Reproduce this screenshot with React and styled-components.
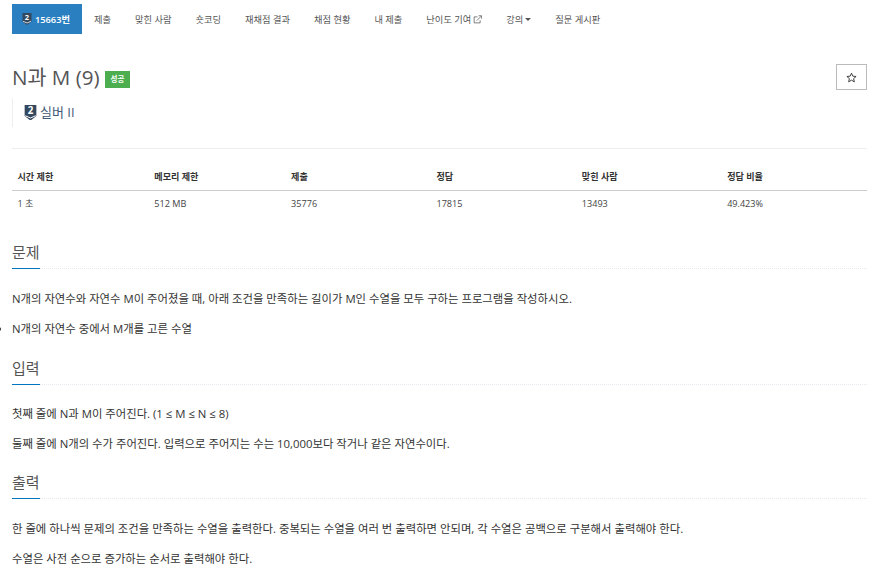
import React from 'react';
import styled, { createGlobalStyle } from 'styled-components';

const GlobalStyle = createGlobalStyle`
    html, body {
        margin: 0;
        background: #fff;
        color: #333;
        font-family: "Open Sans", "Noto Sans CJK KR", sans-serif;
        overflow: hidden;
    }
`;

const Page = styled.div`
    width: 891px;
    height: 585px;
    box-sizing: border-box;
    padding: 4px 24px 0 12px;
    overflow: hidden;
`;

const Nav = styled.ul`
    display: flex;
    list-style: none;
    margin: 0;
    padding: 0;
`;

const NavItem = styled.li`
    display: flex;
    align-items: center;
    gap: 2px;
    height: 30px;
    padding: 0 12px;
    font-size: 9.25px;
    color: #555;
    background: ${p => (p.$active ? '#2a7fc1' : 'transparent')};
    ${p => p.$active && 'color: #fff; font-weight: 600; padding: 0 10px; width: 70px; box-sizing: border-box; gap: 3px;'}
`;

const TitleRow = styled.div`
    display: flex;
    justify-content: space-between;
    align-items: flex-start;
    margin-top: 30px;
`;

const Title = styled.h1`
    display: flex;
    align-items: center;
    gap: 5px;
    margin: 0;
    font-size: 20.6px;
    line-height: 27px;
    font-weight: 400;
    color: #555;
`;

const Badge = styled.span`
    background: #4cae4f;
    color: #fff;
    font-size: 7.5px;
    font-weight: 600;
    line-height: 17px;
    height: 17px;
    padding: 0 6px;
    margin-top: 3px;
`;

const StarButton = styled.button`
    display: flex;
    align-items: center;
    justify-content: center;
    width: 31px;
    height: 26px;
    padding: 0;
    border: 1px solid #bbb;
    background: #fff;
`;

const Tier = styled.div`
    display: flex;
    align-items: center;
    gap: 3px;
    height: 27px;
    margin-top: 7px;
    padding: 0 0 2px 11px;
    border-left: 1px solid #eee;
    font-size: 13px;
    color: #3f5a75;

    svg {
        margin-top: 2px;
    }
`;

const Rule = styled.hr`
    border: 0;
    border-top: 1px solid #eee;
    margin: 21px 0 0;
`;

const InfoTable = styled.table`
    width: 855px;
    margin-top: 14px;
    border-collapse: collapse;
    table-layout: fixed;
    font-size: 9.1px;

    th {
        height: 27px;
        padding: 0 5.5px;
        box-sizing: border-box;
        text-align: left;
        font-weight: 600;
        color: #333;
        border-bottom: 1px solid #ccc;
    }

    td {
        height: 25px;
        padding: 0 5.5px;
        color: #444;
    }
`;

const Section = styled.section`
    margin-top: ${p => p.$top}px;
`;

const Heading = styled.h2`
    display: flex;
    margin: 0;
    height: 28px;
    border-bottom: 1px dotted #e3e9ef;
    font-size: 15px;
    line-height: 24px;
    font-weight: 400;
    color: #555;

    span {
        height: 28px;
        margin-bottom: -1px;
        border-bottom: 1px solid #0076c0;
    }
`;

const Text = styled.p`
    margin: ${p => p.$top}px 0 0;
    font-size: 11.37px;
    line-height: 15px;
    color: #333;
`;

const List = styled.ul`
    margin: 15px 0 0;
    padding: 0;
    font-size: 11.37px;
    line-height: 15px;
    color: #333;
`;

const ShieldIcon = ({ size }) => (
    <svg width={size} height={size * 1.2} viewBox="0 0 20 24">
        <path d="M1 0h18v17l-9 7-9-7z" fill="#34495e" />
        <path d="M2 16.5l8 3.5 8-3.5" fill="none" stroke="#fff" strokeWidth="1.5" />
        <text x="10" y="14" textAnchor="middle" fontSize="15" fontWeight="700" fontFamily="Open Sans" fill="#fff">2</text>
    </svg>
);

const StarIcon = () => (
    <svg width="11" height="11" viewBox="0 0 24 24" fill="none" stroke="#333" strokeWidth="2" strokeLinejoin="miter">
        <path d="M12 2.5l2.9 6.6 7.1.7-5.4 4.7 1.6 7-6.2-3.7-6.2 3.7 1.6-7L2 9.8l7.1-.7z" />
    </svg>
);

const OutIcon = () => (
    <svg width="9" height="9" viewBox="0 0 12 12" fill="none" stroke="#555" strokeWidth="1">
        <path d="M9.5 7v3.5h-8v-8H6" />
        <path d="M5 7.5L11 1.5M7.5 1H11.5V5" />
    </svg>
);

const Caret = styled.span`
    width: 0;
    height: 0;
    border-left: 3px solid transparent;
    border-right: 3px solid transparent;
    border-top: 3px solid #555;
`;

const menus = ['제출', '맞힌 사람', '숏코딩', '재채점 결과', '채점 현황', '내 제출'];
const headers = ['시간 제한', '메모리 제한', '제출', '정답', '맞힌 사람', '정답 비율'];
const values = ['1 초', '512 MB', '35776', '17815', '13493', '49.423%'];
const widths = [16, 16, 17, 17, 17, 17];

const App = () => {
    return (
        <Page>
            <GlobalStyle />
            <Nav>
                <NavItem $active><ShieldIcon size={10} /> 15663번</NavItem>
                {menus.map(m => <NavItem key={m}>{m}</NavItem>)}
                <NavItem>난이도 기여 <OutIcon /></NavItem>
                <NavItem>강의<Caret /></NavItem>
                <NavItem>질문 게시판</NavItem>
            </Nav>

            <TitleRow>
                <Title>N과 M (9) <Badge>성공</Badge></Title>
                <StarButton><StarIcon /></StarButton>
            </TitleRow>
            <Tier><ShieldIcon size={13} /> 실버 II</Tier>
            <Rule />

            <InfoTable>
                <colgroup>
                    {widths.map((w, i) => <col key={i} style={{ width: `${w}%` }} />)}
                </colgroup>
                <thead>
                    <tr>{headers.map(h => <th key={h}>{h}</th>)}</tr>
                </thead>
                <tbody>
                    <tr>{values.map(v => <td key={v}>{v}</td>)}</tr>
                </tbody>
            </InfoTable>

            <Section $top={24}>
                <Heading><span>문제</span></Heading>
                <Text $top={22}>N개의 자연수와 자연수 M이 주어졌을 때, 아래 조건을 만족하는 길이가 M인 수열을 모두 구하는 프로그램을 작성하시오.</Text>
                <List><li>N개의 자연수 중에서 M개를 고른 수열</li></List>
            </Section>

            <Section $top={20}>
                <Heading><span>입력</span></Heading>
                <Text $top={21}>첫째 줄에 N과 M이 주어진다. (1 ≤ M ≤ N ≤ 8)</Text>
                <Text $top={15}>둘째 줄에 N개의 수가 주어진다. 입력으로 주어지는 수는 10,000보다 작거나 같은 자연수이다.</Text>
            </Section>

            <Section $top={19}>
                <Heading><span>출력</span></Heading>
                <Text $top={22}>한 줄에 하나씩 문제의 조건을 만족하는 수열을 출력한다. 중복되는 수열을 여러 번 출력하면 안되며, 각 수열은 공백으로 구분해서 출력해야 한다.</Text>
                <Text $top={15}>수열은 사전 순으로 증가하는 순서로 출력해야 한다.</Text>
            </Section>
        </Page>
    );
}

export default App;
